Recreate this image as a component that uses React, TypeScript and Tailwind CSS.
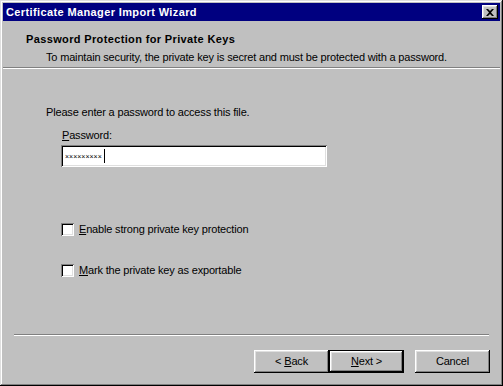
const raised =
  'shadow-[inset_-1px_-1px_#000,inset_1px_1px_#fff,inset_-2px_-2px_#808080,inset_2px_2px_#dfdfdf]';
const sunken =
  'shadow-[inset_1px_1px_#808080,inset_-1px_-1px_#fff,inset_2px_2px_#000,inset_-2px_-2px_#dfdfdf]';

function Btn({ children, def = false }: { children: React.ReactNode; def?: boolean }) {
  return (
    <div className={`w-[75px] h-[23px] ${def ? 'border border-black' : ''}`}>
      <div className={`w-full h-full flex items-center justify-center bg-[#c0c0c0] ${raised}`}>
        {children}
      </div>
    </div>
  );
}

function Check({ children }: { children: React.ReactNode }) {
  return (
    <div className="flex items-center gap-[5px] h-[14px]">
      <div className={`w-[13px] h-[13px] bg-white ${sunken}`} />
      <span>{children}</span>
    </div>
  );
}

export default function App() {
  return (
    <div
      className={`w-[503px] h-[386px] bg-[#c0c0c0] p-[3px] flex flex-col text-[11px] leading-[13px] tracking-[-0.17px] text-black shadow-[inset_-1px_-1px_#000,inset_1px_1px_#dfdfdf,inset_-2px_-2px_#808080,inset_2px_2px_#fff]`}
      style={{ fontFamily: '"Liberation Sans", Arial, sans-serif' }}
    >
      {/* Title bar */}
      <div className="h-[18px] bg-[#000080] flex items-center justify-between pl-[3px] pr-[2px]">
        <span className="text-white font-bold tracking-[0.38px]">Certificate Manager Import Wizard</span>
        <div className={`w-[16px] h-[14px] bg-[#c0c0c0] flex items-center justify-center ${raised}`}>
          <svg width="8" height="7" viewBox="0 0 8 7">
            <path d="M0 0h2l2 2 2-2h2L5 3.5 8 7H6L4 5 2 7H0l3-3.5z" fill="#000" />
          </svg>
        </div>
      </div>

      {/* Header */}
      <div className="pt-[12px] pl-[23px] font-bold tracking-[0.36px]">Password Protection for Private Keys</div>
      <div className="pt-[5px] pl-[43px]">
        To maintain security, the private key is secret and must be protected with a password.
      </div>
      <div className="mt-[3px] h-[2px] border-t border-[#808080] border-b border-b-white" />

      {/* Body */}
      <div className="pl-[43px] pt-[37px]">Please enter a password to access this file.</div>
      <div className="pl-[59px] pt-[10px]">
        <span className="underline">P</span>assword:
      </div>
      <div className="pl-[58px] pt-[3px]">
        <div className={`w-[266px] h-[22px] bg-white flex items-center pl-[4px] ${sunken}`}>
          <span className="text-[7px] tracking-[0px] leading-none">×××××××××</span>
          <span className="w-px h-[14px] bg-black ml-[2px]" />
        </div>
      </div>

      <div className="pl-[58px] pt-[55px] flex flex-col gap-[27px]">
        <Check>
          <span className="underline">E</span>nable strong private key protection
        </Check>
        <Check>
          <span className="underline">M</span>ark the private key as exportable
        </Check>
      </div>

      {/* Footer */}
      <div className="mt-auto pl-[11px] pr-[11px]">
        <div className="h-[2px] border-t border-[#808080] border-b border-b-white" />
      </div>
      <div className="flex justify-end items-center gap-[11px] pr-[10px] pt-[14px] pb-[10px]">
        <div className="flex">
          <Btn>
            &lt; <span className="underline ml-[3px]">B</span>ack
          </Btn>
          <Btn def>
            <span className="underline">N</span>ext &gt;
          </Btn>
        </div>
        <Btn>Cancel</Btn>
      </div>
    </div>
  );
}
